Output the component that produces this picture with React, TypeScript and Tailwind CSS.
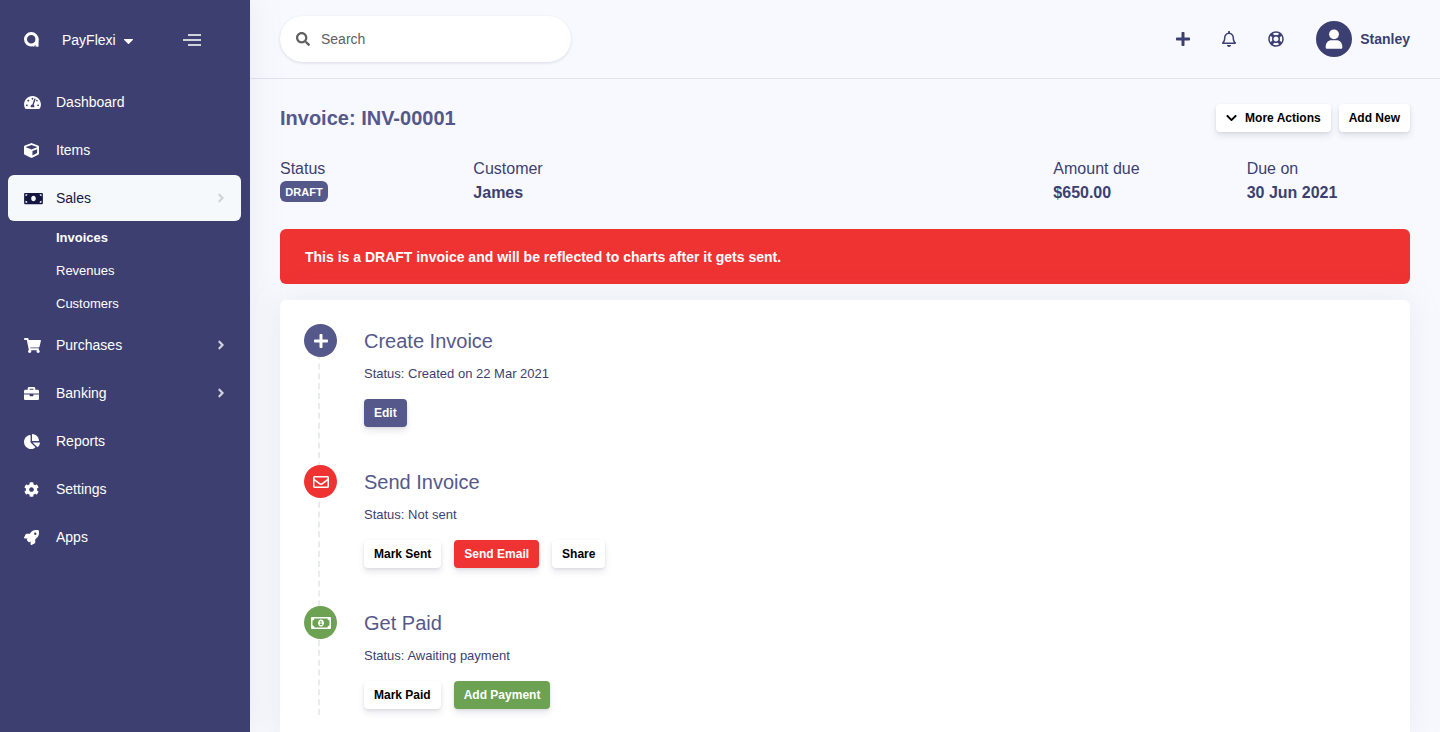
import type { ReactNode } from "react";
import type { IconType } from "react-icons";
import {
  FaAngleRight,
  FaBriefcase,
  FaChartPie,
  FaChevronDown,
  FaCog,
  FaCube,
  FaMoneyBill,
  FaPlus,
  FaRegBell,
  FaRegEnvelope,
  FaRegLifeRing,
  FaRegMoneyBillAlt,
  FaRocket,
  FaSearch,
  FaShoppingCart,
  FaTachometerAlt,
} from "react-icons/fa";

type NavEntry = {
  label: string;
  icon: IconType;
  iconClass: string;
  expandable?: boolean;
  active?: boolean;
  children?: string[];
};

const navigation: NavEntry[] = [
  { label: "Dashboard", icon: FaTachometerAlt, iconClass: "h-[15px] w-[17px]" },
  { label: "Items", icon: FaCube, iconClass: "h-[15px] w-[15px]" },
  {
    label: "Sales",
    icon: FaMoneyBill,
    iconClass: "h-[15px] w-[19px]",
    expandable: true,
    active: true,
    children: ["Invoices", "Revenues", "Customers"],
  },
  { label: "Purchases", icon: FaShoppingCart, iconClass: "h-[15px] w-[17px]", expandable: true },
  { label: "Banking", icon: FaBriefcase, iconClass: "h-[15px] w-[15px]", expandable: true },
  { label: "Reports", icon: FaChartPie, iconClass: "h-[15px] w-4" },
  { label: "Settings", icon: FaCog, iconClass: "h-[15px] w-[15px]" },
  { label: "Apps", icon: FaRocket, iconClass: "h-[15px] w-[15px]" },
];

function Logo() {
  return (
    <svg viewBox="0 0 14 14" className="h-[15px] w-[15px]" fill="none" aria-hidden="true">
      <circle cx="6.8" cy="6.8" r="5.4" stroke="white" strokeWidth="2.8" />
      <path d="M10.800 6h2.800v7.700h-2.800z" fill="white" />
      <path d="M8.400 11.600l1.600 2h-1.600z" fill="white" />
    </svg>
  );
}

function NavItem({ entry }: { entry: NavEntry }) {
  const Icon = entry.icon;
  const tone = entry.active ? "rounded-md bg-[#f6f9fc] text-[#14173f]" : "text-white";
  return (
    <li>
      <a href="#" className={`flex h-[46px] items-center px-4 text-sm ${tone}`}>
        <span className="w-8">
          <Icon className={entry.iconClass} />
        </span>
        <span className="flex-1">{entry.label}</span>
        {entry.expandable && <FaAngleRight className="h-[14px] w-2 text-[#ced4da]" />}
      </a>
      {entry.children && (
        <ul>
          {entry.children.map((child, i) => (
            <li key={child}>
              <a
                href="#"
                className={`flex h-[33px] items-center pl-12 text-[13px] text-white ${i === 0 ? "font-bold" : ""}`}
              >
                {child}
              </a>
            </li>
          ))}
        </ul>
      )}
    </li>
  );
}

function Sidebar() {
  return (
    <aside className="relative z-10 w-[250px] shrink-0 bg-[#3e3f71] px-2 text-white shadow-[0_0_32px_rgba(136,152,170,0.15)]">
      <div className="flex h-[79px] items-center pl-4">
        <Logo />
        <button type="button" className="ml-[23px] flex items-center gap-2 text-sm">
          PayFlexi
          <svg viewBox="0 0 9 5" className="mt-1 h-[5px] w-[9px]" fill="currentColor" aria-hidden="true">
            <path d="M0.6 0h7.8c.6 0 .8.5.4.9L5 4.7a.7.7 0 0 1-1 0L.2.9C-.2.5 0 0 .6 0z" />
          </svg>
        </button>
        <button type="button" aria-label="Toggle sidebar" className="ml-[50px] flex flex-col items-end gap-[3px]">
          <span className="h-0.5 w-[13px] bg-[#ced4da]" />
          <span className="h-0.5 w-[18px] bg-[#ced4da]" />
          <span className="h-0.5 w-[13px] bg-[#ced4da]" />
        </button>
      </div>
      <nav>
        <ul className="mr-px flex flex-col gap-0.5">
          {navigation.map((entry) => (
            <NavItem key={entry.label} entry={entry} />
          ))}
        </ul>
      </nav>
    </aside>
  );
}

function Header() {
  return (
    <header className="flex h-[79px] items-center justify-between border-b border-[#e0e2ed] px-[30px]">
      <label className="flex h-[46px] w-[291px] items-center gap-[11px] rounded-full bg-white px-4 text-[#606060] shadow-[0_1px_3px_rgba(50,50,93,0.15)]">
        <FaSearch className="h-[14px] w-[14px]" />
        <input
          type="search"
          aria-label="Search"
          placeholder="Search"
          className="min-w-0 flex-1 bg-transparent text-sm outline-none placeholder:text-[#606060]"
        />
      </label>
      <div className="flex items-center text-[#3c3f72]">
        <button type="button" aria-label="Create" className="mr-8">
          <FaPlus className="h-4 w-[14px]" />
        </button>
        <button type="button" aria-label="Notifications" className="mr-8">
          <FaRegBell className="h-4 w-[14px]" />
        </button>
        <a href="#" aria-label="Help" className="mr-8">
          <FaRegLifeRing className="h-4 w-4" />
        </a>
        <button type="button" className="flex items-center gap-2 text-sm font-bold">
          <svg viewBox="0 0 36 36" className="h-9 w-9" aria-hidden="true">
            <circle cx="18" cy="18" r="18" fill="#3c3f72" />
            <circle cx="18" cy="13.300" r="4.900" fill="white" />
            <path d="M9.700 25.500c0-3.500 2.500-6.200 5.600-6.200h5.400c3.100 0 5.600 2.700 5.600 6.200v.9c0 .9-.6 1.400-1.400 1.400H11.100c-.8 0-1.400-.5-1.400-1.400z" fill="white" />
          </svg>
          Stanley
        </button>
      </div>
    </header>
  );
}

const buttonTones = {
  white: "bg-white text-black",
  purple: "bg-[#55588b] text-white",
  red: "bg-[#ef3232] text-white",
  green: "bg-[#6da252] text-white",
};

type Tone = keyof typeof buttonTones;

function Button({ tone = "white", children }: { tone?: Tone; children: ReactNode }) {
  return (
    <button
      type="button"
      className={`flex h-7 items-center gap-2 rounded px-2.5 text-xs font-bold shadow-[0_4px_6px_rgba(50,50,93,0.11),0_1px_3px_rgba(0,0,0,0.08)] ${buttonTones[tone]}`}
    >
      {children}
    </button>
  );
}

function Summary({ label, children, className }: { label: string; children: ReactNode; className: string }) {
  return (
    <div className={`px-[15px] ${className}`}>
      <dt>{label}</dt>
      <dd className="font-bold">{children}</dd>
    </div>
  );
}

type StepProps = {
  title: string;
  status: string;
  badgeClass: string;
  icon: ReactNode;
  actions: { label: string; tone?: Tone }[];
};

const steps: StepProps[] = [
  {
    title: "Create Invoice",
    status: "Created on 22 Mar 2021",
    badgeClass: "bg-[#55588b]",
    icon: <FaPlus className="h-4 w-[14px]" />,
    actions: [{ label: "Edit", tone: "purple" }],
  },
  {
    title: "Send Invoice",
    status: "Not sent",
    badgeClass: "bg-[#ef3232]",
    icon: <FaRegEnvelope className="h-4 w-4" />,
    actions: [{ label: "Mark Sent" }, { label: "Send Email", tone: "red" }, { label: "Share" }],
  },
  {
    title: "Get Paid",
    status: "Awaiting payment",
    badgeClass: "bg-[#6da252]",
    icon: <FaRegMoneyBillAlt className="h-4 w-5" />,
    actions: [{ label: "Mark Paid" }, { label: "Add Payment", tone: "green" }],
  },
];

function Step({ title, status, badgeClass, icon, actions }: StepProps) {
  return (
    <li className="relative flex gap-[27px] pb-[38px] last:pb-1.5">
      <span className={`flex h-[33px] w-[33px] shrink-0 items-center justify-center rounded-full text-white ${badgeClass}`}>
        {icon}
      </span>
      <div className="pt-[3px]">
        <h2 className="text-xl/7 text-[#55588b]">{title}</h2>
        <p className="mt-[9px] text-[13px]/5">Status: {status}</p>
        <div className="mt-[15px] flex gap-[13px]">
          {actions.map((action) => (
            <Button key={action.label} tone={action.tone}>
              {action.label}
            </Button>
          ))}
        </div>
      </div>
    </li>
  );
}

export default function App() {
  return (
    <div className="flex h-screen bg-[#f8f9fe] font-['Liberation_Sans',Arial,sans-serif] text-[#3c3f72]">
      <Sidebar />
      <div className="min-w-0 flex-1 overflow-y-auto [scrollbar-width:none]">
        <Header />
        <main className="px-[30px] pt-[25px] pb-8">
          <div className="flex items-center justify-between">
            <h1 className="text-xl font-bold text-[#55588b]">Invoice: INV-00001</h1>
            <div className="flex gap-2">
              <Button>
                <FaChevronDown className="h-3 w-[11px]" />
                More Actions
              </Button>
              <Button>Add New</Button>
            </div>
          </div>

          <dl className="-mx-[15px] mt-[25px] grid grid-cols-12 text-base/6">
            <Summary label="Status" className="col-span-2">
              <span className="flex h-[21px] w-12 items-center justify-center rounded-md bg-[#55588b] text-[11px] text-white">
                DRAFT
              </span>
            </Summary>
            <Summary label="Customer" className="col-span-6">
              James
            </Summary>
            <Summary label="Amount due" className="col-span-2">
              $650.00
            </Summary>
            <Summary label="Due on" className="col-span-2">
              30 Jun 2021
            </Summary>
          </dl>

          <div role="alert" className="mt-6 flex h-[55px] items-center rounded-md bg-[#ef3232] px-[25px] text-sm font-bold text-white">
            This is a DRAFT invoice and will be reflected to charts after it gets sent.
          </div>

          <section className="mt-4 rounded-md bg-white p-6 shadow-[0_0_32px_rgba(136,152,170,0.15)]">
            <ol className="relative">
              <li aria-hidden="true" className="absolute inset-y-0 left-[14px] border-l-2 border-dashed border-[#e9ecef]" />
              {steps.map((step) => (
                <Step key={step.title} {...step} />
              ))}
            </ol>
          </section>
        </main>
      </div>
    </div>
  );
}
